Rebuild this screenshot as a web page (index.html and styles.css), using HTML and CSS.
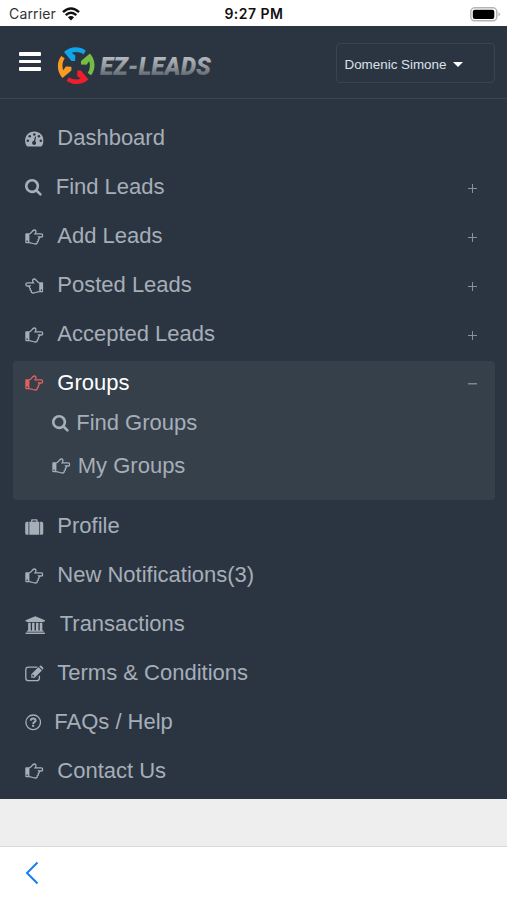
FILE: index.html
```
<!DOCTYPE html>
<html lang="en">
<head>
<meta charset="utf-8">
<title>EZ-Leads</title>
<link rel="stylesheet" href="styles.css">
</head>
<body>
<svg class="defs" width="0" height="0">
  <symbol id="hand" viewBox="0 0 18.6 18.6">
    <path class="line" d="M4.200 5.900C6.200 5.700 7.400 2.200 9.200 2c2.400-.1 2 2.400.9 3.900h6c2.200 0 2.200 3.100 0 3.100h-2.300c.9 1.100.4 2.200-.5 2.500.4 1-.1 2-1 2.300.2 1.600-.6 2.200-2 2.200-2.600 0-3.800-1.400-6.100-1.400"/>
    <path class="solid" fill-rule="evenodd" d="M1.200 5.300h3.200v9.900H1.200Q.3 15.200.3 14.300V6.200q0-.9.900-.9zM1.500 12.400v1.500h1.300v-1.500z"/>
  </symbol>
  <symbol id="search" viewBox="64 128 1792 1792">
    <path class="solid" d="M1216 832q0-185-131.500-316.500t-316.500-131.500-316.500 131.500-131.500 316.500 131.500 316.500 316.500 131.500 316.500-131.500 131.500-316.500zm512 832q0 52-38 90t-90 38q-54 0-90-38l-343-342q-179 124-399 124-143 0-273.500-55.500t-225-150-150-225-55.500-273.500 55.500-273.500 150-225 225-150 273.500-55.500 273.500 55.500 225 150 150 225 55.500 273.500q0 220-124 399l343 343q37 37 37 90z"/>
  </symbol>
  <symbol id="gauge" viewBox="0 0 18.6 18.6">
    <path class="solid" d="M1.700 16C-2.500 9 2 1.500 9.300 1.500s11.800 7.500 7.600 14.500q-.3.400-.8.400H2.500q-.5 0-.8-.4z"/>
    <g class="hole"><circle cx="9.300" cy="4.400" r="1.250"/><circle cx="4.700" cy="6.300" r="1.250"/><circle cx="13.900" cy="6.300" r="1.250"/><circle cx="2.800" cy="10.800" r="1.250"/><circle cx="15.800" cy="10.800" r="1.250"/><path d="M10.100 6.500l1 .3-.9 4.500a2 2 0 1 1-1.400-.3z"/></g>
  </symbol>
  <symbol id="case" viewBox="0 0 18.6 18.6">
    <path class="solid" fill-rule="evenodd" d="M4.300 3.800h1.800V2.200q0-.9.900-.9h4.600q.9 0 .9.900v1.600h1.800v13H4.300zM7.400 2.500v1.300h3.800V2.500zM3.500 3.800v13H2.100Q.2 16.800.2 14.900V5.700q0-1.900 1.900-1.900zM15.100 3.800h1.400q1.900 0 1.900 1.900v9.200q0 1.900-1.900 1.900h-1.400z"/>
  </symbol>
  <symbol id="bank" viewBox="0 0 20 18.600">
    <path class="solid" d="M10 .3l9.700 3.900v1.200h-1.300q0 .7-.7.700H2.300q-.7 0-.7-.7H.3V4.200zM2.900 6.800h2.600v7.700h1.300V6.800h2.500v7.700h1.400V6.800h2.500v7.700h1.300V6.800h2.600v7.700h.6q.7 0 .7.700v.6H1.600v-.6q0-.7.7-.7h.6zM1 16.400h18q.7 0 .7.700v1.200H.3v-1.200q0-.7.7-.7z"/>
  </symbol>
  <symbol id="edit" viewBox="0 0 18.600 18.600">
    <path class="line" d="M12.300 2.200H3.500Q.8 2.200.8 4.900v8.100q0 2.700 2.700 2.700h8.200q2.700 0 2.700-2.700v-2.200"/>
    <path class="solid" fill-rule="evenodd" d="M13.500 2.100l3.400 3.400-7.200 7.200H6.300V9.300zM7.400 9.900v1.700h1.400l.6-.6-1.400-1.700zM14.300 1.400l.8-.7q.6-.5 1.200 0l2 2q.5.600 0 1.200l-.6.800z"/>
  </symbol>
  <symbol id="help" viewBox="0 0 16.400 18.600">
    <circle class="line" cx="8.200" cy="9.300" r="7.300"/>
    <path class="line thick" d="M5.800 7.600C6 4.800 10.700 4.900 10.600 7.500c0 1.500-2.400 1.500-2.400 3.400"/>
    <path class="solid" d="M7.100 11.800h2.100v2H7.100z"/>
  </symbol>
</svg>

<header class="status">
  <span class="carrier">Carrier</span>
  <svg class="wifi" width="18" height="14" viewBox="0 0 18 14"><path d="M1 5.200Q9-2.200 17 5.200M3.700 8.100q5.300-4.800 10.600 0"/><path class="dot" d="M5.900 10.300q3.100-2.600 6.200 0L9 13.500z"/></svg>
  <span class="time">9:27 PM</span>
  <svg class="battery" width="31" height="15" viewBox="0 0 31 15"><rect class="shell" x=".8" y=".8" width="26" height="13" rx="4"/><rect x="2.800" y="2.700" width="21.500" height="9.200" rx="2"/><path class="tip" d="M28.500 5q3 2.300 0 4.600z"/></svg>
</header>

<main class="app">
  <div class="topbar">
    <div class="burger"><i></i><i></i><i></i></div>
    <svg class="logo" width="156" height="40" viewBox="0 0 156 40">
      <defs>
        <linearGradient id="steel" x1="0" y1="0" x2="0" y2="1"><stop offset=".2" stop-color="#b2b6ba"/><stop offset=".5" stop-color="#92979c"/><stop offset=".8" stop-color="#626970"/></linearGradient>
        <path id="arrow" d="M13.700-12.200C19-6.500 20.200 2.500 15 9.600L11.500 7.400C14 3.500 14.300-.8 13-4.500L10.300-.9 4.800-1.100V-4.700z"/>
      </defs>
      <g transform="translate(19.200 19.700)">
        <use href="#arrow" fill="#76bd43"/>
        <use href="#arrow" fill="#ed1f2c" transform="rotate(90)"/>
        <use href="#arrow" fill="#f79b22" transform="rotate(180)"/>
        <use href="#arrow" fill="#10a4e8" transform="rotate(270)"/>
      </g>
      <text class="brand" x="43" y="29" textLength="111" lengthAdjust="spacingAndGlyphs" fill="url(#steel)">EZ-LEADS</text>
    </svg>
    <div class="user"><span>Domenic Simone</span><b class="caret"></b></div>
  </div>

  <nav class="menu">
    <a class="item"><svg class="ic"><use href="#gauge"/></svg><span>Dashboard</span></a>
    <a class="item"><svg class="ic search"><use href="#search"/></svg><span>Find Leads</span><em class="plus"></em></a>
    <a class="item"><svg class="ic"><use href="#hand"/></svg><span>Add Leads</span><em class="plus"></em></a>
    <a class="item"><svg class="ic flip"><use href="#hand"/></svg><span>Posted Leads</span><em class="plus"></em></a>
    <a class="item"><svg class="ic"><use href="#hand"/></svg><span>Accepted Leads</span><em class="plus"></em></a>
    <section class="group">
      <a class="item open"><svg class="ic"><use href="#hand"/></svg><span>Groups</span><em class="minus"></em></a>
      <a class="item sub"><svg class="ic search"><use href="#search"/></svg><span>Find Groups</span></a>
      <a class="item sub"><svg class="ic"><use href="#hand"/></svg><span>My Groups</span></a>
    </section>
    <a class="item"><svg class="ic"><use href="#case"/></svg><span>Profile</span></a>
    <a class="item"><svg class="ic"><use href="#hand"/></svg><span>New Notifications(3)</span></a>
    <a class="item"><svg class="ic bank"><use href="#bank"/></svg><span>Transactions</span></a>
    <a class="item"><svg class="ic"><use href="#edit"/></svg><span>Terms &amp; Conditions</span></a>
    <a class="item"><svg class="ic help"><use href="#help"/></svg><span>FAQs / Help</span></a>
    <a class="item"><svg class="ic"><use href="#hand"/></svg><span>Contact Us</span></a>
  </nav>
</main>
<div class="strip"></div>
<footer class="bottom">
  <svg width="14" height="24" viewBox="0 0 14 24"><path d="M12.500 1.500L2 12l10.500 10.500"/></svg>
</footer>
</body>
</html>
```
FILE: styles.css
```
* { box-sizing: border-box; }
body {
  margin: 0;
  height: 900px;
  display: flex;
  flex-direction: column;
  overflow: hidden;
  background: #fff;
  font-family: "Liberation Sans", Arial, sans-serif;
}
.defs { position: absolute; }

.status {
  height: 25.500px;
  display: grid;
  grid-template-columns: auto auto 1fr auto;
  align-items: center;
  padding: 2px 6px 0 9px;
  font: 14px/24px Inter, sans-serif;
  color: #333;
}
.carrier { letter-spacing: .15px; }
.wifi { margin-left: 6px; fill: none; stroke: #111; stroke-width: 2.400; }
.wifi .dot { fill: #111; stroke: none; }
.time { color: #111; font-weight: 600; font-size: 14px; padding-left: 144.500px; letter-spacing: .45px; }
.battery { fill: #000; }
.battery .shell { fill: #fff; stroke: #b5b5b5; stroke-width: 1.500; }
.battery .tip { fill: #b5b5b5; }

.app { height: 773px; background: #2b3541; }
.topbar {
  height: 73px;
  display: flex;
  align-items: center;
  padding: 0 12px 0 19px;
  border-bottom: 1.500px solid #384652;
}
.burger { width: 22px; display: grid; gap: 4px; }
.burger i { height: 3.600px; border-radius: 1px; background: #fff; }
.logo { margin: 9px 0 0 16px; }
.brand { font: italic 900 25px Roboto, sans-serif; }
.user {
  margin: 3px 0 0 auto;
  width: 159px;
  height: 40px;
  display: flex;
  align-items: center;
  gap: 7px;
  padding: 3px 0 0 7.500px;
  border: 1.500px solid #374550;
  border-radius: 4px;
  color: #dce1e8;
  font-size: 13.400px;
}
.caret { border: 5px solid transparent; border-top-color: #fff; border-bottom: 0; }

.menu { padding: 15.500px 12px 0 13px; }
.item {
  height: 48.850px;
  display: flex;
  align-items: center;
  padding: 0 17px 0 12px;
  color: #a6aeb8;
  font-size: 22px;
  line-height: 26px;
}
.item span { margin-left: .700px; }
.ic { width: 18.600px; height: 18.600px; margin: 2px 13px 0 0; flex: none; }
.ic.search { width: 18px; height: 18px; margin-right: 12px; }
.ic.bank { width: 20.500px; margin-right: 13.500px; }
.ic.help { width: 16.400px; margin-right: 12.200px; }
.flip { transform: scaleX(-1); }
.solid { fill: currentColor; }
.line { fill: none; stroke: currentColor; stroke-width: 1.300; }
.line.thick { stroke-width: 2; }
.hole { fill: #2b3541; }
.plus, .minus {
  width: 9px;
  height: 9px;
  margin: 3px 1px 0 auto;
  background: linear-gradient(#7d8791, #7d8791) center / 9px 1.500px no-repeat;
}
.plus {
  background: linear-gradient(#87919b, #87919b) center / 9px 1px no-repeat,
    linear-gradient(#87919b, #87919b) center / 1px 9px no-repeat;
}
.group {
  height: 139px;
  margin: 3px 0 1.700px;
  border-radius: 4px;
  background: #35404b;
}
.group .item { height: 42.900px; }
.group .open { height: 40.200px; padding-top: 2.800px; color: #fff; }
.open .ic { color: #e3605f; }
.item.sub { padding-left: 39px; }
.sub .ic { margin-right: 6.500px; }
.sub .ic.search { margin-right: 5.500px; }

.strip { height: 48px; background: #eee; border-bottom: 1.500px solid #d9d9d9; }
.bottom { flex: 1; padding: 14px 0 0 25px; background: #fff; }
.bottom path { fill: none; stroke: #177ef0; stroke-width: 2; }
```
